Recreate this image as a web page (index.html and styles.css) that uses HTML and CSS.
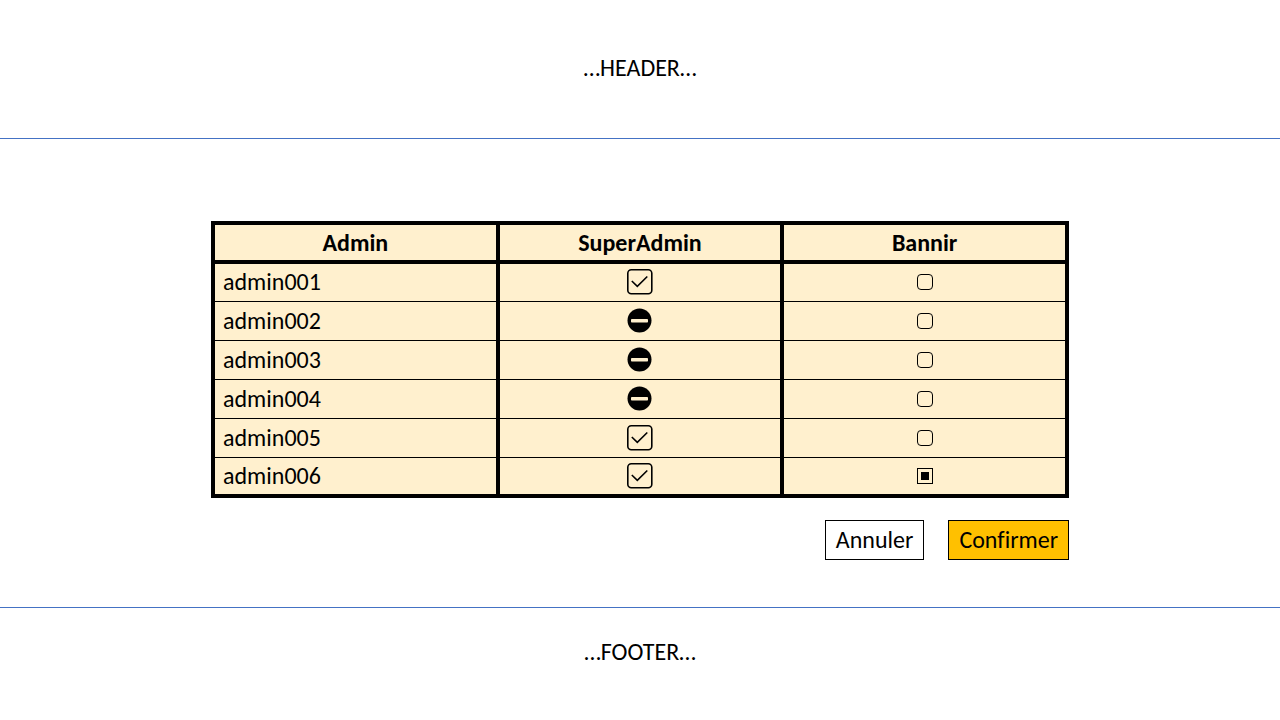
FILE: index.html
```html
<!DOCTYPE html>
<html lang="fr">
<head>
<meta charset="utf-8">
<title>Gestion des admins</title>
<link rel="stylesheet" href="styles.css">
</head>
<body>
<svg class="sprite" aria-hidden="true">
  <symbol id="yes" viewBox="0 0 26 26">
    <rect x="0.800" y="0.800" width="24" height="24" rx="3.5" fill="none" stroke="#000" stroke-width="1.6"/>
    <path d="M4.800 12 10.300 17.300 20.300 7.500" fill="none" stroke="#000" stroke-width="1.6"/>
  </symbol>
  <symbol id="no" viewBox="0 0 26 26">
    <circle cx="12.500" cy="12.600" r="12" fill="#000"/>
    <rect x="4" y="10.900" width="17" height="3.600" rx="0.8" fill="#fff0ce"/>
  </symbol>
</svg>
<header class="header">…HEADER…</header>
<main class="main">
  <form class="form">
    <table class="table">
      <thead>
        <tr><th scope="col">Admin</th><th scope="col">SuperAdmin</th><th scope="col">Bannir</th></tr>
      </thead>
      <tbody>
        <tr><td><label for="b1">admin001</label></td><td class="mark"><svg class="icon" role="img" aria-label="Oui"><use href="#yes"/></svg></td><td class="mark"><input class="check" type="checkbox" id="b1"></td></tr>
        <tr><td><label for="b2">admin002</label></td><td class="mark"><svg class="icon" role="img" aria-label="Non"><use href="#no"/></svg></td><td class="mark"><input class="check" type="checkbox" id="b2"></td></tr>
        <tr><td><label for="b3">admin003</label></td><td class="mark"><svg class="icon" role="img" aria-label="Non"><use href="#no"/></svg></td><td class="mark"><input class="check" type="checkbox" id="b3"></td></tr>
        <tr><td><label for="b4">admin004</label></td><td class="mark"><svg class="icon" role="img" aria-label="Non"><use href="#no"/></svg></td><td class="mark"><input class="check" type="checkbox" id="b4"></td></tr>
        <tr><td><label for="b5">admin005</label></td><td class="mark"><svg class="icon" role="img" aria-label="Oui"><use href="#yes"/></svg></td><td class="mark"><input class="check" type="checkbox" id="b5"></td></tr>
        <tr><td><label for="b6">admin006</label></td><td class="mark"><svg class="icon" role="img" aria-label="Oui"><use href="#yes"/></svg></td><td class="mark"><input class="check" type="checkbox" id="b6" checked></td></tr>
      </tbody>
    </table>
    <div class="actions">
      <button class="button" type="button">Annuler</button>
      <button class="button primary" type="submit">Confirmer</button>
    </div>
  </form>
</main>
<footer class="footer">…FOOTER…</footer>
</body>
</html>
```

FILE: styles.css
```css
* {
  box-sizing: border-box;
}

body {
  margin: 0;
  min-height: 100vh;
  display: flex;
  flex-direction: column;
  background: #fff;
  color: #000;
  font: 24px/32px Carlito, Lato, sans-serif;
  font-variant-ligatures: none;
}

.sprite {
  position: absolute;
  width: 0;
  height: 0;
}

.header {
  padding: 52px 0 54px;
  border-bottom: 1px solid #4472c4;
  text-align: center;
}

.main {
  padding: 82px 16px 47px;
}

.form {
  max-width: 858px;
  margin: 0 auto;
}

.table {
  width: 100%;
  table-layout: fixed;
  border-collapse: collapse;
  background: #fff0ce;
  border: 4px solid #000;
}

.table th,
.table td {
  height: 39px;
  padding: 0 8px;
  border-left: 4px solid #000;
  border-right: 4px solid #000;
}

.table th {
  border-bottom: 4px solid #000;
}

.table td {
  border-bottom: 1px solid #000;
}

.table tbody tr:last-child td {
  border-bottom: 4px solid #000;
}

.table .mark {
  text-align: center;
}

.icon {
  display: block;
  width: 26px;
  height: 26px;
  margin: 0 auto;
}

.check {
  appearance: none;
  display: block;
  width: 16px;
  height: 16px;
  margin: 0 auto;
  border: 1px solid #000;
  border-radius: 4px;
}

.check:checked {
  border-radius: 0;
  padding: 3px;
  background: #000 content-box;
}

.actions {
  display: flex;
  justify-content: flex-end;
  gap: 24px;
  margin-top: 22px;
}

.button {
  height: 40px;
  padding: 0 10px;
  border: 1px solid #000;
  background: #fff;
  color: #000;
  font: inherit;
  font-variant-ligatures: none;
}

.primary {
  background: #ffc000;
}

.footer {
  padding: 28px 0;
  border-top: 1px solid #4472c4;
  text-align: center;
}
```
